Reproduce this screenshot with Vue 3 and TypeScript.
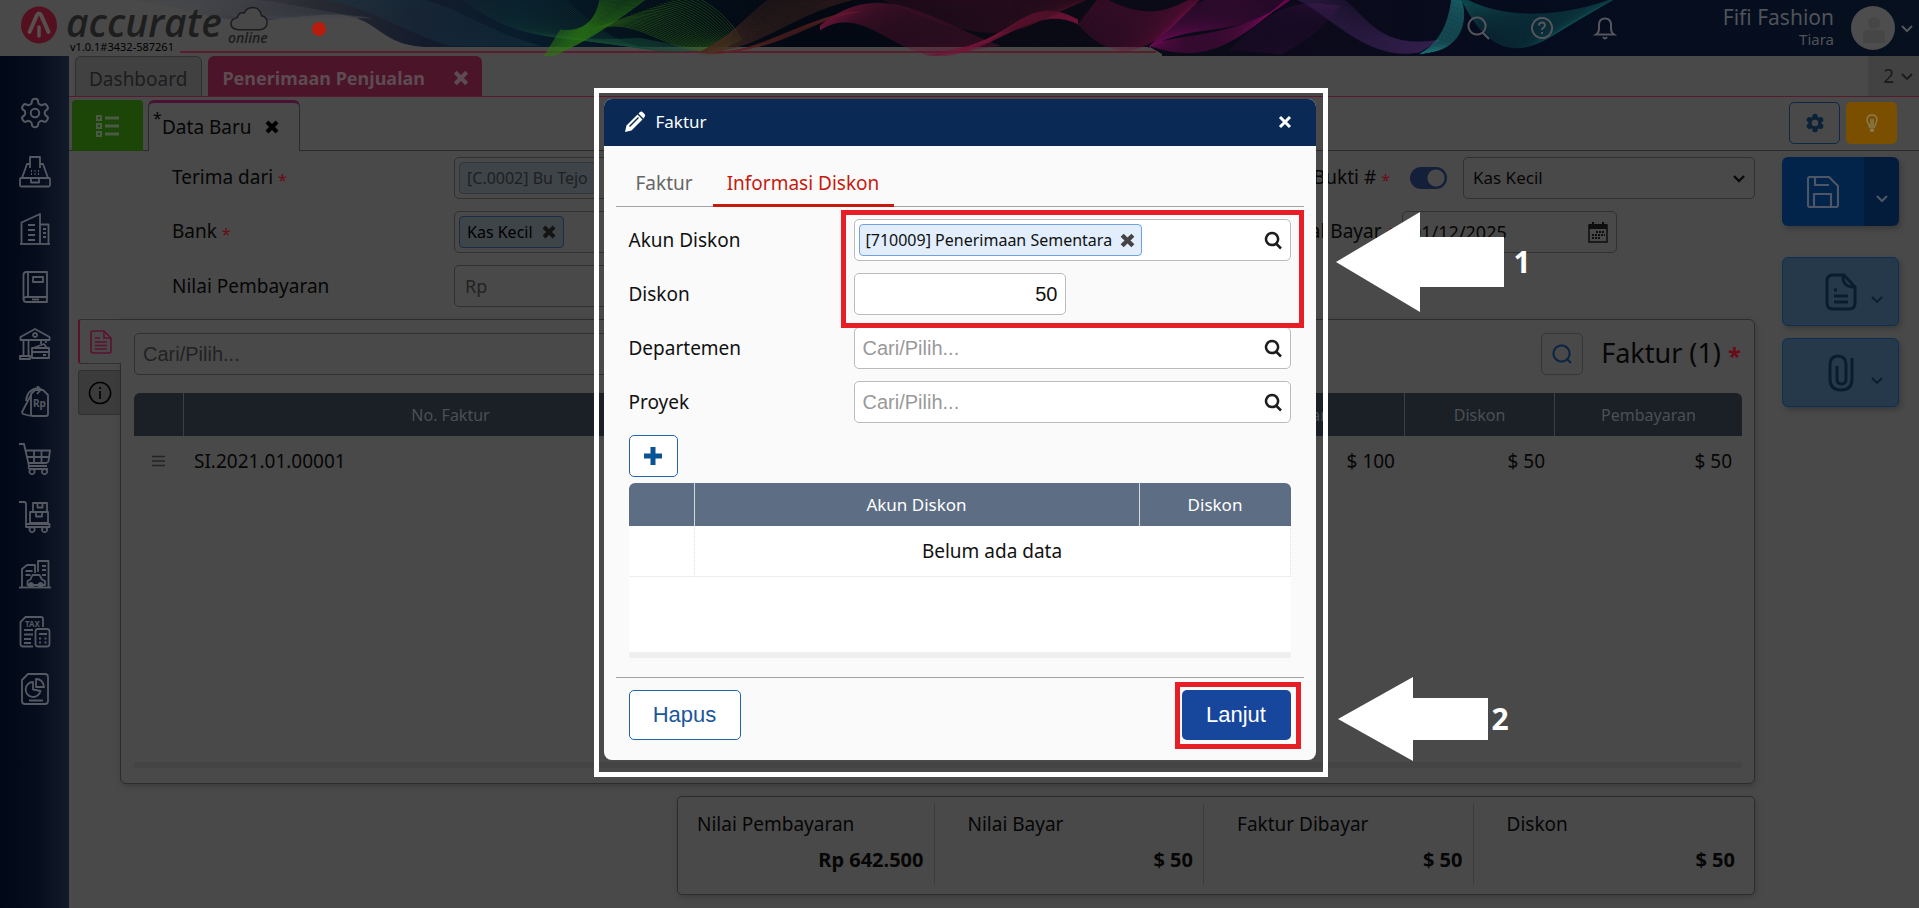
<script setup lang="ts">
import { ref } from 'vue'

interface MenuIcon {
  label: string
  paths: string[]
  text?: string
  tx?: number
  ty?: number
  ts?: number
}

interface Ribbon {
  from: number[]
  to: number[]
  lines: number
  color: string
  opacity: number
}

const gear =
  'M12.22 2h-.44a2 2 0 0 0-2 2v.18a2 2 0 0 1-1 1.73l-.43.25a2 2 0 0 1-2 0l-.15-.08a2 2 0 0 0-2.73.73l-.22.38a2 2 0 0 0 .73 2.73l.15.1a2 2 0 0 1 1 1.72v.51a2 2 0 0 1-1 1.74l-.15.09a2 2 0 0 0-.73 2.73l.22.38a2 2 0 0 0 2.73.73l.15-.08a2 2 0 0 1 2 0l.43.25a2 2 0 0 1 1 1.73V20a2 2 0 0 0 2 2h.44a2 2 0 0 0 2-2v-.18a2 2 0 0 1 1-1.73l.43-.25a2 2 0 0 1 2 0l.15.08a2 2 0 0 0 2.73-.73l.22-.39a2 2 0 0 0-.73-2.73l-.15-.08a2 2 0 0 1-1-1.74v-.5a2 2 0 0 1 1-1.74l.15-.09a2 2 0 0 0 .73-2.73l-.22-.38a2 2 0 0 0-2.73-.73l-.15.08a2 2 0 0 1-2 0l-.43-.25a2 2 0 0 1-1-1.73V4a2 2 0 0 0-2-2z'
const hub = 'M12 9a3 3 0 1 0 0 6a3 3 0 1 0 0-6z'

const menu: MenuIcon[] = [
  {
    label: 'Kasir',
    paths: [
      'M11 12V1h10v11',
      'M11 8H8L3 22h26L24 8h-3',
      'M2 22h28q1 0 1 1v6q0 1.500-1.500 1.500h-27q-1.500 0-1.500-1.500v-6q0-1 1-1z',
      'M12 23v3.500h8V23',
      'M12 15h1M15.500 15h1M19 15h1M12 18h1M15.500 18h1M19 18h1',
    ],
  },
  {
    label: 'Perusahaan',
    paths: [
      'M1 31h30',
      'M2.500 31V9.500L21 1v30',
      'M21 11.500h8.500V31',
      'M9 12h7M9 17h7M9 22h7M9 27h7M24 16h3M24 20h3M24 24h3',
    ],
  },
  {
    label: 'Buku besar',
    paths: [
      'M7.500 1H28v30H7.500q-3 0-3-3V4q0-3 3-3z',
      'M9 1v25',
      'M4.500 28q0-2 3-2H28',
      'M14 6h10v5H14z',
      'M13 28.500h7',
    ],
  },
  {
    label: 'Kas dan bank',
    paths: [
      'M1.500 12V9L16 1l14.500 8v3z',
      'M16 5a2 2 0 1 0 .1 0z',
      'M4.500 12v15M9.500 12v15M22 12v4M27 12v3M1 31v-3h10v3z',
      'M14 20l11-4 3 4',
      'M13 20h17v10H13zM13 24h17M24 27h3',
    ],
  },
  {
    label: 'Penjualan',
    paths: [
      'M12 8l4-4h8l5 5v19q0 2-2 2H14q-2 0-2-2z',
      'M12 9L3 26l1 2 8 2',
      'M7 15q1-12 13-13l3 2M18 0l4 3.500-4 4.500',
    ],
    text: 'Rp',
    tx: 20.5,
    ty: 21,
    ts: 10,
  },
  {
    label: 'Pembelian',
    paths: [
      'M0 1h5l5 22h18M6.500 7.500H31L29.500 18q-.5 2-2.500 2H9M8 14h22M15 8v11M22.500 8v11',
      'M10 23q-1 3 1 3h18',
      'M13 26a2.600 2.600 0 1 0 .1 0zM25.500 26a2.600 2.600 0 1 0 .1 0z',
    ],
  },
  {
    label: 'Persediaan',
    paths: [
      'M0 1h5q2 0 2 2v23h23.500v-3H7',
      'M14 2h14v9H14zM18.500 2v4.500h5V2M11 11h18v11H11zM17 11v4.500h6V11',
      'M13 26a2.600 2.600 0 1 0 .1 0zM25.500 26a2.600 2.600 0 1 0 .1 0z',
    ],
  },
  {
    label: 'Aset tetap',
    paths: [
      'M0 29.500h32',
      'M3 29V11l5-4h8v8M19 14V3h10.500v26',
      'M6.500 13h7M6.500 17h5M23 8h4M23 12h4M23 17h4',
      'M8.500 27v-4l3-1.500 2-4.500h7l2.500 4.500 3 1.500v4zM12 25a2 2 0 1 0 .1 0zM21.500 25a2 2 0 1 0 .1 0z',
    ],
  },
  {
    label: 'Pajak',
    paths: [
      'M14 30.500H4q-2.500 0-2.500-2.500V6l5-5H22q2 0 2 2v8',
      'M5 14h9M5 18.500h9M5 23h7M5 27h7',
      'M19 13h9q2.500 0 2.500 2.500V28q0 2.500-2.500 2.500h-9q-2.500 0-2.500-2.500V15.500q0-2.500 2.500-2.500zM20 18h8M20 22.500h2M25.500 22.500h2M20 26.500h2M25.500 26.500h2',
    ],
    text: 'TAX',
    tx: 13.5,
    ty: 10.5,
    ts: 8,
  },
  {
    label: 'Laporan',
    paths: [
      'M9 1h17q3 0 3 3v24q0 3-3 3H6q-3 0-3-3V7z',
      'M14 9a7.500 7.500 0 1 0 7.500 9l-7.500-1.500z',
      'M17 6q7 0 8 8h-8zM10 27.500h14',
    ],
  },
]

const ribbons: Ribbon[] = [
  { from: [140, -2, 190, 2, 220, 22, 300, 18], to: [200, -2, 270, -4, 310, 12, 370, 18], lines: 20, color: '#44484e', opacity: 0.45 },
  { from: [300, -4, 360, 0, 400, 30, 450, 46], to: [400, -4, 450, 0, 480, 30, 540, 46], lines: 40, color: '#1d3a4a', opacity: 0.3 },
  { from: [460, -4, 500, 30, 540, 44, 640, 38], to: [560, -4, 590, 20, 620, 60, 700, 50], lines: 40, color: '#184a38', opacity: 0.3 },
  { from: [540, 62, 590, 40, 610, 26, 650, -4], to: [560, 30, 590, 34, 600, 10, 600, -6], lines: 44, color: '#2d7a12', opacity: 0.42 },
  { from: [590, 30, 640, 14, 660, 52, 715, 52], to: [690, -6, 725, 10, 735, 30, 742, 40], lines: 28, color: '#2f6a12', opacity: 0.5 },
  { from: [700, 52, 760, 54, 790, 10, 870, -4], to: [715, 44, 750, 20, 760, -2, 790, -10], lines: 50, color: '#4a2820', opacity: 0.34 },
  { from: [700, 54, 750, 58, 800, 20, 850, 12], to: [740, 50, 790, 44, 820, 16, 860, 12], lines: 16, color: '#5c2420', opacity: 0.3 },
  { from: [820, 30, 860, 4, 890, 50, 935, 56], to: [820, 26, 880, -24, 930, 20, 1000, 46], lines: 56, color: '#621634', opacity: 0.32 },
  { from: [925, 56, 990, 62, 1030, 0, 1078, 24], to: [990, 42, 1020, 20, 1040, -2, 1078, 20], lines: 30, color: '#741638', opacity: 0.36 },
  { from: [870, -6, 930, 20, 990, 50, 1040, 20], to: [960, -6, 1000, 0, 1030, 4, 1100, -6], lines: 44, color: '#4c1028', opacity: 0.36 },
  { from: [1078, 24, 1110, 60, 1140, 58, 1175, 24], to: [1100, -4, 1160, 30, 1180, 0, 1210, -10], lines: 54, color: '#6c103c', opacity: 0.36 },
  { from: [1148, 48, 1180, 16, 1190, 0, 1230, -6], to: [1150, 46, 1200, 20, 1240, 40, 1285, 0], lines: 44, color: '#5c0c4c', opacity: 0.4 },
  { from: [1150, 46, 1200, 62, 1230, 50, 1285, 0], to: [1160, 42, 1190, 34, 1240, 36, 1290, 0], lines: 22, color: '#740c56', opacity: 0.36 },
  { from: [1230, 50, 1260, 20, 1290, -4, 1330, 6], to: [1280, 54, 1310, 40, 1330, 20, 1340, 6], lines: 34, color: '#36103f', opacity: 0.4 },
  { from: [1285, -4, 1320, 0, 1360, 64, 1420, 52], to: [1340, -4, 1370, 20, 1380, 50, 1440, 40], lines: 50, color: '#37224f', opacity: 0.42 },
  { from: [1420, 54, 1445, 40, 1450, 14, 1452, -4], to: [1428, 52, 1460, 50, 1470, 20, 1460, -4], lines: 24, color: '#1c6a70', opacity: 0.6 },
  { from: [1460, -4, 1480, 40, 1510, 68, 1560, 30], to: [1460, -4, 1500, 20, 1560, 20, 1620, -4], lines: 56, color: '#114c50', opacity: 0.36 },
]

function strands(r: Ribbon): string[] {
  return Array.from({ length: r.lines }, (_, i) => {
    const t = i / (r.lines - 1)
    const p = r.from.map((v, k) => Math.round((v + (r.to[k] - v) * t) * 10) / 10)
    return `M${p[0]} ${p[1]}C${p[2]} ${p[3]} ${p[4]} ${p[5]} ${p[6]} ${p[7]}`
  })
}

const cross = 'M2 2L12 12M12 2L2 12'
const chevron = 'M2 3l5 5 5-5'
const lens = 'M8 2a6 6 0 1 0 .1 0zM12 12.500l5 5'

const summary = [
  { label: 'Nilai Pembayaran', value: 'Rp 642.500' },
  { label: 'Nilai Bayar', value: '$ 50' },
  { label: 'Faktur Dibayar', value: '$ 50' },
  { label: 'Diskon', value: '$ 50' },
]

const diskon = ref('50')
const tanggal = ref('01/12/2025')
const auto = ref(true)
</script>

<template>
  <div class="app">
    <header class="top">
      <svg class="art" viewBox="0 0 1919 56" preserveAspectRatio="none" aria-hidden="true">
        <defs>
          <linearGradient id="sky" x1="0" x2="1">
            <stop offset="0" stop-color="#494949" />
            <stop offset=".1" stop-color="#454648" />
            <stop offset=".16" stop-color="#2a2c33" />
            <stop offset=".22" stop-color="#141b2b" />
            <stop offset=".27" stop-color="#081c2c" />
            <stop offset=".33" stop-color="#04121c" />
            <stop offset=".42" stop-color="#030812" />
            <stop offset=".55" stop-color="#0a0a14" />
            <stop offset=".68" stop-color="#0c0a1a" />
            <stop offset=".8" stop-color="#040c1e" />
            <stop offset="1" stop-color="#07101f" />
          </linearGradient>
        </defs>
        <rect width="1919" height="56" fill="url(#sky)" />
        <path d="M0 0H130C190 6 210 24 268 20C300 17 318 14 340 15C380 18 380 47 430 47H1150L1162 54V56H0z" fill="#494949" />
        <path d="M180 52H1156" stroke="#5c1c2e" stroke-width="2" />
        <g v-for="(r, i) in ribbons" :key="i" fill="none" :stroke="r.color" :stroke-opacity="r.opacity">
          <path v-for="(d, k) in strands(r)" :key="k" :d="d" />
        </g>
      </svg>
      <div class="brand">
        <svg class="mark" viewBox="0 0 36 42" aria-hidden="true">
          <ellipse cx="18" cy="19" rx="18" ry="18.500" fill="#551020" />
          <path d="M8.500 26L16 9q2-3 4 0l7.500 17" fill="none" stroke="#57504f" stroke-width="4" stroke-linecap="round" />
          <path d="M18 21v9" stroke="#57504f" stroke-width="3.500" stroke-linecap="round" />
        </svg>
        <div class="names">
          <span class="word">accurate</span>
          <span class="version">v1.0.1#3432-587261</span>
        </div>
        <div class="cloud">
          <svg viewBox="0 0 42 28" aria-hidden="true">
            <path d="M9 25.500H33q7.500-1 7.500-8q-.5-6-6-7Q33 1.500 24.500 1.500q-6.500.5-8.500 6Q10 6.500 8.500 12.500q-7 1.500-7 7q.5 5 7.500 6z" fill="#484848" stroke="#1c1c1c" stroke-width="1.600" />
          </svg>
          <span>online</span>
        </div>
        <span class="dot"></span>
      </div>
      <div class="account">
        <button class="plain" aria-label="Cari">
          <svg width="26" height="26" viewBox="0 0 26 26"><path d="M11 2.500a8.500 8.500 0 1 0 .1 0zM17 18l6 6" /></svg>
        </button>
        <button class="plain" aria-label="Bantuan">
          <svg width="26" height="26" viewBox="0 0 26 26"><path d="M13 3a10 10 0 1 0 .1 0zM10 10.500q0-3 3-3t3 2.800q0 1.600-1.800 2.600-1.200.7-1.200 2.100M13 17v2" /></svg>
        </button>
        <button class="plain" aria-label="Notifikasi">
          <svg width="26" height="26" viewBox="0 0 26 26"><path d="M4 19.500q3-2 3-6v-3.500q0-6.500 6-6.500t6 6.500v3.500q0 4 3 6zM11 22q2 3 4 0" /></svg>
        </button>
        <div class="who">
          <strong>Fifi Fashion</strong>
          <span>Tiara</span>
        </div>
        <svg class="avatar" viewBox="0 0 44 44" aria-hidden="true">
          <circle cx="22" cy="22" r="22" fill="#4d4d4d" />
          <circle cx="23" cy="17" r="6" fill="#464646" />
          <path d="M12 37V29q0-5 5-5h12q5 0 5 5v8z" fill="#464646" />
        </svg>
        <button class="plain caret" aria-label="Menu akun">
          <svg width="14" height="11" viewBox="0 0 14 11"><path :d="chevron" /></svg>
        </button>
      </div>
    </header>

    <div class="body">
      <nav class="side">
        <a href="#" aria-label="Pengaturan">
          <svg width="34" height="34" viewBox="0 0 24 24"><g stroke-width="1.400"><path :d="gear" /><path :d="hub" /></g></svg>
        </a>
        <a v-for="m in menu" :key="m.label" href="#" :aria-label="m.label">
          <svg width="32" height="32" viewBox="0 0 32 32">
            <path v-for="(d, i) in m.paths" :key="i" :d="d" />
            <text v-if="m.text" :x="m.tx" :y="m.ty" :font-size="m.ts" text-anchor="middle">{{ m.text }}</text>
          </svg>
        </a>
      </nav>

      <main class="main">
        <div class="tabs">
          <button class="tab">Dashboard</button>
          <button class="tab on">
            Penerimaan Penjualan
            <svg width="16" height="16" viewBox="0 0 14 14"><path :d="cross" stroke-width="3.600" /></svg>
          </button>
          <button class="count">
            2
            <svg width="14" height="11" viewBox="0 0 14 11"><path :d="chevron" stroke-width="1.800" /></svg>
          </button>
        </div>

        <div class="subtabs">
          <button class="list" aria-label="Daftar">
            <svg width="24" height="24" viewBox="0 0 24 24" fill="none" stroke="#4a5a44" stroke-width="2">
              <path d="M1 2h4v4H1zM1 10h4v4H1zM1 18h4v4H1z" />
              <path d="M9 4h14M9 12h14M9 20h14" stroke-width="3" />
            </svg>
          </button>
          <button class="subtab">
            <sup>*</sup>Data Baru
            <svg width="14" height="14" viewBox="0 0 14 14"><path :d="cross" stroke-width="4" /></svg>
          </button>
          <div class="tools">
            <button class="cog" aria-label="Preferensi">
              <svg width="20" height="20" viewBox="0 0 24 24"><path :d="gear" stroke-width="2" fill="#0c2238" stroke="#0c2238" /><circle cx="12" cy="12" r="4" fill="#494949" /></svg>
            </button>
            <button class="tip" aria-label="Petunjuk">
              <svg width="20" height="20" viewBox="0 0 20 20" fill="none" stroke="#8a7a50" stroke-width="1.500"><path d="M7.500 14q0-2-1.500-4T5 6.500Q5.500 2 10 2t5 4.500q0 1.500-1 3.500t-1.500 4zM9 6v7M11 6v7" /><path d="M8 15.500h4v2l-1 1.500H9l-1-1.500z" fill="#8a7a50" stroke="none" /></svg>
            </button>
          </div>
        </div>

        <div class="work">
          <div class="content">
            <div class="form">
              <div class="line">
                <label for="dari">Terima dari <i>*</i></label>
                <div class="box"><span class="chip off">[C.0002] Bu Tejo</span><input id="dari" /></div>
                <div class="pair">
                  <label for="bukti">No Bukti # <i>*</i></label>
                  <input v-model="auto" class="toggle" type="checkbox" aria-label="Nomor otomatis" />
                  <span class="pick">
                    <select id="bukti"><option>Kas Kecil</option></select>
                    <svg width="14" height="11" viewBox="0 0 14 11"><path :d="chevron" stroke-width="2.400" /></svg>
                  </span>
                </div>
              </div>
              <div class="line">
                <label for="bank">Bank <i>*</i></label>
                <div class="box">
                  <span class="chip">Kas Kecil <svg width="14" height="14" viewBox="0 0 14 14"><path :d="cross" stroke-width="4" /></svg></span>
                  <input id="bank" />
                </div>
                <div class="pair">
                  <label for="tgl">Tanggal Bayar <i>*</i></label>
                  <span class="date">
                    <input id="tgl" v-model="tanggal" />
                    <svg width="20" height="22" viewBox="0 0 20 22">
                      <path d="M1 4h18v17H1z" fill="none" stroke="#0e0e0e" stroke-width="1.500" />
                      <path d="M1 3h18v5H1zM4 1h2v3H4zM14 1h2v3h-2z" fill="#0e0e0e" />
                      <path d="M8 11h9M4 14h13M4 17h9" stroke="#0e0e0e" stroke-width="2" stroke-dasharray="2 1" />
                    </svg>
                  </span>
                </div>
              </div>
              <div class="line">
                <label for="nilai">Nilai Pembayaran</label>
                <div class="box"><input id="nilai" placeholder="Rp" /></div>
                <div class="pair"></div>
              </div>
            </div>

            <div class="detail">
              <div class="rail">
                <button class="r on" aria-label="Rincian">
                  <svg width="22" height="24" viewBox="0 0 22 24"><path d="M3 1h11l7 7v13q0 2-2 2H3q-2 0-2-2V3q0-2 2-2zM14 1v7h7M5 8h5M5 12h12M5 15.500h12M5 19h12" /></svg>
                </button>
                <button class="r" aria-label="Info">
                  <svg width="24" height="24" viewBox="0 0 24 24"><path d="M12 1.500a10.500 10.500 0 1 0 .1 0zM12 10v8M12 6v2" /></svg>
                </button>
              </div>
              <section class="panel">
                <div class="bar">
                  <input class="find" placeholder="Cari/Pilih..." aria-label="Cari faktur" />
                  <button class="look" aria-label="Cari"><svg width="20" height="20" viewBox="0 0 20 20"><path d="M9.500 1.500a8 8 0 1 0 .1 0zM15 15l4 4" /></svg></button>
                  <h2>Faktur (1) <i>*</i></h2>
                </div>
                <table class="grid">
                  <colgroup><col class="c1" /><col class="c2" /><col /><col class="c4" /><col class="c5" /><col class="c6" /></colgroup>
                  <thead>
                    <tr><th></th><th>No. Faktur</th><th></th><th>Nilai Bayar</th><th>Diskon</th><th>Pembayaran</th></tr>
                  </thead>
                  <tbody>
                    <tr>
                      <td class="grip"><svg width="13" height="12" viewBox="0 0 13 12"><path d="M0 1.500h13M0 6h13M0 10.500h13" /></svg></td>
                      <td>SI.2021.01.00001</td>
                      <td></td>
                      <td class="num">$ 100</td>
                      <td class="num">$ 50</td>
                      <td class="num">$ 50</td>
                    </tr>
                  </tbody>
                </table>
                <div class="hbar"></div>
              </section>
            </div>

            <dl class="sum">
              <div v-for="s in summary" :key="s.label">
                <dt>{{ s.label }}</dt>
                <dd>{{ s.value }}</dd>
              </div>
            </dl>
          </div>

          <aside class="acts">
            <button class="act save" aria-label="Simpan">
              <svg width="32" height="32" viewBox="0 0 32 32"><path d="M3 1h19l9 9v19q0 2-2 2H3q-2 0-2-2V3q0-2 2-2zM7 31V18h17v13M8 2v7h14" /></svg>
              <svg class="car" width="14" height="11" viewBox="0 0 14 11"><path :d="chevron" /></svg>
            </button>
            <button class="act first" aria-label="Dokumen">
              <svg width="32" height="38" viewBox="0 0 32 38"><path d="M8 2h11l11 12v16q0 6-6 6H8q-6 0-6-6V8q0-6 6-6zM18 2q-1 12 11 12M9 17h3M9 23h14M9 29h14" /></svg>
              <svg class="car" width="14" height="11" viewBox="0 0 14 11"><path :d="chevron" /></svg>
            </button>
            <button class="act" aria-label="Lampiran">
              <svg width="32" height="38" viewBox="0 0 32 38"><path d="M27 4v21q0 11-11 11T5 25V11q0-9 8-9t8 9v14q0 5-4.500 5T12 25V12" /></svg>
              <svg class="car" width="14" height="11" viewBox="0 0 14 11"><path :d="chevron" /></svg>
            </button>
          </aside>
        </div>
      </main>
    </div>

    <div class="frame">
      <div class="dialog" role="dialog" aria-labelledby="judul">
        <div class="dhead">
          <svg width="22" height="22" viewBox="0 0 22 22" fill="#fff">
            <path d="M1 21l1.500-6.500L13.500 3.500l5 5L7.500 19.500z" />
            <path d="M14.500 2.500L16 1q1.500-1 3 .5l1.500 1.500q1.500 1.500 0 3L19.500 7.500z" />
            <path d="M5.500 15.500L14.500 6.500" stroke="#0a2a55" stroke-width="1.500" />
          </svg>
          <h1 id="judul">Faktur</h1>
          <button aria-label="Tutup"><svg width="14" height="14" viewBox="0 0 14 14"><path :d="cross" stroke-width="3" /></svg></button>
        </div>
        <div class="dtabs">
          <button>Faktur</button>
          <button class="on">Informasi Diskon</button>
        </div>
        <div class="fields">
          <div class="f">
            <label for="akun">Akun Diskon</label>
            <div class="in">
              <span class="tag">[710009] Penerimaan Sementara <svg width="15" height="15" viewBox="0 0 14 14"><path :d="cross" stroke-width="4" /></svg></span>
              <input id="akun" />
              <svg class="lens" width="19" height="19" viewBox="0 0 19 19"><path :d="lens" /></svg>
            </div>
          </div>
          <div class="f">
            <label for="diskon">Diskon</label>
            <input id="diskon" v-model="diskon" class="amount" />
          </div>
          <div class="f">
            <label for="dept">Departemen</label>
            <div class="in">
              <input id="dept" placeholder="Cari/Pilih..." />
              <svg class="lens" width="19" height="19" viewBox="0 0 19 19"><path :d="lens" /></svg>
            </div>
          </div>
          <div class="f">
            <label for="proyek">Proyek</label>
            <div class="in">
              <input id="proyek" placeholder="Cari/Pilih..." />
              <svg class="lens" width="19" height="19" viewBox="0 0 19 19"><path :d="lens" /></svg>
            </div>
          </div>
          <button class="add" aria-label="Tambah"><svg width="18" height="18" viewBox="0 0 18 18"><path d="M9 0v18M0 9h18" stroke="#0b5394" stroke-width="5" /></svg></button>
          <div class="sheet">
            <table>
              <colgroup><col class="k1" /><col /><col class="k3" /></colgroup>
              <thead><tr><th></th><th>Akun Diskon</th><th>Diskon</th></tr></thead>
              <tbody><tr><td></td><td colspan="2">Belum ada data</td></tr></tbody>
            </table>
          </div>
          <div class="mark-area"></div>
        </div>
        <div class="dfoot">
          <button class="del">Hapus</button>
          <span class="ring"><button class="next">Lanjut</button></span>
        </div>
      </div>
      <div class="call one">
        <svg width="168" height="100" viewBox="0 0 168 100" aria-hidden="true"><path d="M0 50L84 0v25h84v50H84v25z" fill="#fff" /></svg>
        <b>1</b>
      </div>
      <div class="call two">
        <svg width="150" height="84" viewBox="0 0 150 84" aria-hidden="true"><path d="M0 42L75 0v21h75v42H75v21z" fill="#fff" /></svg>
        <b>2</b>
      </div>
    </div>
  </div>
</template>

<style>
html,
body {
  margin: 0;
  background: #494949;
}
</style>

<style scoped>
.app,
.app * {
  box-sizing: border-box;
}
.app {
  position: relative;
  display: flex;
  flex-direction: column;
  min-height: 100vh;
  overflow: hidden;
  background: #494949;
  color: #060606;
  font-family: "Noto Sans", "Open Sans", sans-serif;
  font-size: 19px;
  line-height: 26px;
}
button,
input,
select {
  margin: 0;
  padding: 0;
  border: 0;
  background: none;
  color: inherit;
  font: inherit;
}
input {
  min-width: 0;
  outline: 0;
}
i {
  color: #6a0a18;
  font-size: 16px;
  font-style: normal;
  vertical-align: -2px;
}
svg {
  flex: none;
}

/* header */
.top {
  position: relative;
  display: flex;
  justify-content: space-between;
  height: 56px;
}
.art {
  position: absolute;
  inset: 0;
  width: 100%;
  height: 100%;
}
.brand,
.account {
  position: relative;
  display: flex;
}
.brand {
  padding: 6px 0 0 21px;
}
.mark {
  width: 36px;
  height: 42px;
}
.names {
  display: flex;
  flex-direction: column;
  width: 162px;
  margin-left: 9px;
}
.word {
  height: 34px;
  color: #1e1e1e;
  font: italic 600 39px/32px "Open Sans", "Noto Sans", sans-serif;
}
.version {
  padding-left: 4px;
  color: #000;
  font-size: 11px;
  line-height: 14px;
}
.cloud {
  width: 42px;
  color: #1c1c1c;
  font: italic 600 14px/12px "Open Sans", sans-serif;
}
.cloud svg {
  display: block;
  width: 42px;
  height: 26px;
}
.dot {
  width: 14px;
  height: 14px;
  margin: 16px 0 0 42px;
  border-radius: 50%;
  background: #b81c0c;
}
.account {
  align-items: center;
  padding-right: 5px;
}
.plain {
  display: flex;
  margin-right: 37px;
}
.plain svg,
.caret svg {
  fill: none;
  stroke: #55555c;
  stroke-width: 2;
}
.who {
  display: flex;
  flex-direction: column;
  align-items: flex-end;
  margin: 0 17px 2px 68px;
  color: #505359;
  font-size: 15px;
  line-height: 20px;
}
.who strong {
  font-size: 21px;
  font-weight: 400;
  line-height: 24px;
}
.avatar {
  width: 44px;
  height: 44px;
  margin-right: 5px;
}
.plain.caret {
  margin: 0;
}

/* shell */
.body {
  display: flex;
  flex: 1;
}
.side {
  display: flex;
  flex-direction: column;
  align-items: center;
  justify-content: space-between;
  align-self: stretch;
  width: 69px;
  padding: 40px 0 203px;
  background: linear-gradient(90deg, #010917, #050c1c 50%, #131a2a);
}
.side a {
  display: flex;
}
.side svg {
  fill: none;
  stroke: #555962;
  stroke-width: 1.800;
  stroke-linejoin: round;
}
.side text {
  fill: #555962;
  stroke: none;
  font-weight: 700;
}
.main {
  display: flex;
  flex: 1;
  flex-direction: column;
}
.tabs {
  display: flex;
  gap: 6px;
  height: 41px;
  padding-left: 6px;
  border-bottom: 1px solid #581a2c;
}
.tab {
  padding: 4px 14px 0 13px;
  border: 1px solid #303030;
  border-bottom: 0;
  border-radius: 6px 6px 0 0;
  background: #414141;
  color: #1d1d1d;
}
.tab.on {
  display: flex;
  align-items: center;
  gap: 28px;
  padding: 4px 13px 0 14px;
  border: 0;
  background: #4c1428;
  color: #5c4c52;
  font-size: 18px;
  font-weight: 700;
}
.tab.on svg {
  stroke: #5c4c52;
}
.count {
  display: flex;
  align-items: center;
  justify-content: flex-end;
  gap: 6px;
  width: 51px;
  margin-left: auto;
  padding-right: 5px;
  background: #424242;
  color: #1a1a1a;
}
.count svg {
  fill: none;
  stroke: #1a1a1a;
}
.subtabs {
  display: flex;
  height: 54px;
  padding: 3px 0 0 3px;
  background: linear-gradient(#2a2a2a, #2a2a2a) 0 100% / 100% 1px no-repeat;
}
.list {
  display: flex;
  align-items: center;
  justify-content: center;
  width: 71px;
  border-radius: 4px 4px 0 0;
  background: #1c4608;
}
.subtab {
  position: relative;
  display: flex;
  align-items: center;
  gap: 13px;
  width: 152px;
  margin-left: 5px;
  padding-left: 13px;
  border: 1px solid #2a2a2a;
  border-top: 3px solid #4b1032;
  border-bottom: 0;
  border-radius: 6px 6px 0 0;
  background: #494949;
}
.subtab sup {
  position: absolute;
  top: 2px;
  left: 4px;
  line-height: 26px;
}
.subtab svg {
  stroke: #000;
}
.tools {
  display: flex;
  gap: 6px;
  margin-left: auto;
  padding: 2px 22px 7px 0;
}
.tools button {
  display: flex;
  align-items: center;
  justify-content: center;
  width: 51px;
  border-radius: 5px;
}
.cog {
  border: 1px solid #0c2844;
}
.cog svg {
  fill: none;
}
.tip {
  background: #7a5000;
}
.work {
  display: flex;
  flex: 1;
  gap: 27px;
  padding: 6px 20px 13px 9px;
}
.content {
  display: flex;
  flex: 1;
  flex-direction: column;
  gap: 12px;
}

/* form */
.form {
  display: flex;
  flex-direction: column;
  gap: 12px;
  padding-left: 94px;
}
.line {
  display: flex;
  align-items: center;
  height: 42px;
}
.line > label {
  width: 282px;
}
.box {
  display: flex;
  flex: 1;
  align-items: center;
  height: 42px;
  padding-left: 4px;
  border: 1px solid #303030;
  border-radius: 5px;
}
.box input {
  flex: 1;
}
.box input::placeholder,
.find::placeholder {
  color: #222;
  opacity: 1;
}
.box > input:first-child {
  padding-left: 6px;
  font-size: 18px;
}
.chip {
  display: flex;
  align-items: center;
  gap: 9px;
  height: 32px;
  padding: 0 7px;
  border: 1px solid #1a2c46;
  border-radius: 4px;
  background: #3f4448;
  color: #000;
  font-size: 16px;
}
.chip.off {
  border-color: #2e363e;
  color: #1d2022;
}
.chip svg {
  stroke: #141414;
}
.pair {
  display: flex;
  align-items: center;
  width: 500px;
  margin-left: 260px;
}
.pair label {
  width: 135px;
  text-align: right;
  white-space: nowrap;
}
.toggle {
  width: 37px;
  height: 22px;
  margin: 0 16px 0 20px;
  border-radius: 11px;
  appearance: none;
  background: radial-gradient(circle at 26px 11px, #494949 8px, #14203a 9px);
}
.pick {
  display: flex;
  flex: 1;
  align-items: center;
  padding-right: 8px;
  border: 1px solid #303030;
  border-radius: 5px;
}
.pick select {
  flex: 1;
  height: 40px;
  padding-left: 9px;
  appearance: none;
  font-size: 17px;
}
.pick svg {
  fill: none;
  stroke: #0a0a0a;
}
.date {
  display: flex;
  align-items: center;
  width: 215px;
  height: 42px;
  margin-left: 12px;
  padding: 0 8px;
  border: 1px solid #303030;
  border-radius: 5px;
}
.date input {
  flex: 1;
  font-size: 18px;
}

/* detail */
.detail {
  display: flex;
  flex: 1;
}
.rail {
  display: flex;
  flex-direction: column;
  gap: 6px;
  width: 42px;
}
.r {
  display: flex;
  align-items: center;
  justify-content: center;
  height: 45px;
  border: 1px solid #303030;
  border-right: 0;
  border-radius: 3px 0 0 3px;
  background: #3b3b3b;
}
.r svg {
  fill: none;
  stroke: #000;
  stroke-width: 1.600;
}
.r.on {
  position: relative;
  width: 43px;
  border-left: 2px solid #5a1228;
  background: #494949;
}
.r.on svg {
  stroke: #5a1230;
}
.panel {
  display: flex;
  flex: 1;
  flex-direction: column;
  padding: 13px 12px 15px 13px;
  border: 1px solid #2c2c2c;
  border-radius: 0 6px 6px 6px;
  box-shadow: 1px 2px 5px #3c3c3c;
}
.bar {
  display: flex;
  align-items: center;
  height: 42px;
}
.find {
  flex: 1;
  max-width: 900px;
  height: 42px;
  padding-left: 8px;
  border: 1px solid #303030;
  border-radius: 5px;
  font: 20px/24px "Liberation Sans", Arial, sans-serif;
}
.look {
  display: flex;
  align-items: center;
  justify-content: center;
  width: 42px;
  height: 42px;
  margin-left: auto;
  border: 1px solid #363636;
  border-radius: 5px;
}
.look svg {
  fill: none;
  stroke: #0c2444;
  stroke-width: 2;
}
.bar h2 {
  margin: 0 1px 0 18px;
  font-size: 27px;
  font-weight: 400;
  line-height: 36px;
}
.bar h2 i {
  font-size: 24px;
  font-weight: 700;
}
.grid {
  width: 100%;
  margin-top: 18px;
  border-collapse: separate;
  border-spacing: 0;
  table-layout: fixed;
}
.c1 {
  width: 50px;
}
.c2 {
  width: 534px;
}
.c4 {
  width: 236px;
}
.c5 {
  width: 150px;
}
.c6 {
  width: 187px;
}
.grid th {
  height: 43px;
  padding: 0;
  border-right: 1px solid #3c4044;
  background: #1b2027;
  color: #4c4f54;
  font-size: 16px;
  font-weight: 400;
}
.grid th:first-child {
  border-top-left-radius: 6px;
}
.grid th:last-child {
  border-right: 0;
  border-top-right-radius: 6px;
}
.grid td {
  height: 50px;
  padding: 0 10px;
}
.grid .grip {
  padding-left: 18px;
}
.grip svg {
  display: block;
  stroke: #242424;
  stroke-width: 1.500;
}
.num {
  text-align: right;
}
.hbar {
  height: 6px;
  margin-top: auto;
  border-radius: 3px;
  background: #444;
}
.sum {
  display: grid;
  grid-template-columns: 257fr 270fr 270fr 281fr;
  align-self: flex-end;
  width: 1078px;
  height: 99px;
  margin: 0;
  padding: 7px 0 9px;
  border: 1px solid #2c2c2c;
  border-radius: 5px;
  box-shadow: 1px 2px 5px #3c3c3c;
}
.sum div {
  padding: 7px 10px 0 33px;
  border-right: 1px solid #3c3c3c;
}
.sum div:first-child {
  padding-left: 19px;
}
.sum div:last-child {
  padding-right: 19px;
  border: 0;
}
.sum dd {
  margin: 10px 0 0;
  font-size: 20px;
  font-weight: 700;
  text-align: right;
}

/* side actions */
.acts {
  display: flex;
  flex-direction: column;
  gap: 12px;
  width: 117px;
}
.act {
  position: relative;
  display: flex;
  align-items: center;
  justify-content: center;
  width: 117px;
  height: 69px;
  border: 1px solid #0b3054;
  border-radius: 6px;
  background: #26394a;
  box-shadow: 2px 3px 5px #3a3a3a;
}
.act svg {
  fill: none;
  stroke: #0a1c30;
  stroke-width: 3;
}
.act .car {
  position: absolute;
  right: 14px;
  bottom: 20px;
  stroke-width: 1.800;
}
.act.first {
  margin-top: 19px;
}
.act.save {
  padding-right: 36px;
  border: 0;
  background: linear-gradient(90deg, #02234a 0 82px, #031c3c 82px);
}
.act.save svg {
  stroke: #4c5664;
  stroke-width: 2.200;
}
.act.save .car {
  right: 10px;
  bottom: 22px;
}

/* dialog */
.frame {
  position: absolute;
  top: 88px;
  left: 50%;
  width: 734px;
  margin-left: -366px;
  padding: 6px 7px 12px 5px;
  border: 5px solid #fff;
}
.dialog {
  border-radius: 8px;
  background: #fafafa;
  color: #111;
}
.dhead {
  display: flex;
  align-items: center;
  height: 47px;
  padding: 0 24px 2px 20px;
  border-radius: 8px 8px 0 0;
  background: #0a2a55;
  color: #fff;
}
.dhead h1 {
  flex: 1;
  margin: 0 0 0 10px;
  font-size: 17px;
  font-weight: 400;
}
.dhead button {
  display: flex;
}
.dhead button svg {
  stroke: #fff;
}
.dtabs {
  display: flex;
  height: 61px;
  margin: 0 12px;
  padding: 13px 8px 0;
  background: linear-gradient(#a3a3a3, #a3a3a3) 0 100% / 100% 1px no-repeat;
  color: #666;
}
.dtabs button {
  padding: 0 12px;
}
.dtabs .on {
  margin-left: 8px;
  padding: 3px 15px 0 14px;
  border-bottom: 3px solid #c61a10;
  color: #c61a10;
}
.fields {
  position: relative;
  display: flex;
  flex-direction: column;
  gap: 12px;
  padding: 12px 25px 0;
}
.mark-area {
  position: absolute;
  top: 3px;
  right: 12px;
  width: 463px;
  height: 118px;
  border: 5px solid #e81e26;
  pointer-events: none;
}
.f {
  display: flex;
  align-items: center;
}
.f label {
  flex: none;
  width: 225px;
}
.in {
  display: flex;
  flex: 1;
  align-items: center;
  min-width: 0;
  height: 42px;
  padding: 0 7px 0 4px;
  border: 1px solid #bbb;
  border-radius: 5px;
  background: #fff;
}
.in input {
  flex: 1;
  font: 20px/24px "Liberation Sans", Arial, sans-serif;
}
.in input:first-child {
  padding-left: 4px;
}
.in input::placeholder {
  color: #999;
  opacity: 1;
}
.lens {
  fill: none;
  stroke: #1c1c1c;
  stroke-width: 2.500;
}
.tag {
  display: flex;
  flex: none;
  align-items: center;
  gap: 8px;
  height: 32px;
  padding: 0 6px;
  border: 1px solid #6ea3e0;
  border-radius: 4px;
  background: #e2eefc;
  font-size: 16px;
  white-space: nowrap;
}
.tag svg {
  stroke: #444;
}
.amount {
  width: 212px;
  height: 42px;
  padding-right: 7px;
  border: 1px solid #bbb;
  border-radius: 5px;
  background: #fff;
  font: 20px/24px "Liberation Sans", Arial, sans-serif;
  text-align: right;
}
.add {
  display: flex;
  align-items: center;
  justify-content: center;
  width: 49px;
  height: 42px;
  border: 1px solid #1f66ad;
  border-radius: 5px;
  background: #fff;
}
.sheet {
  height: 175px;
  margin-top: -6px;
  border-bottom: 6px solid #efefef;
  background: #fff;
}
.sheet table {
  width: 100%;
  border-collapse: separate;
  border-spacing: 0;
  table-layout: fixed;
}
.k1 {
  width: 66px;
}
.k3 {
  width: 151px;
}
.sheet th {
  height: 43px;
  padding: 0;
  border-right: 1px solid #d4d9de;
  background: #5c6d84;
  color: #fff;
  font-size: 17px;
  font-weight: 400;
}
.sheet th:first-child {
  border-top-left-radius: 6px;
}
.sheet th:last-child {
  border-right: 0;
  border-top-right-radius: 6px;
}
.sheet td {
  height: 51px;
  padding: 0;
  border-right: 1px dotted #ddd;
  border-bottom: 1px solid #eee;
  text-align: center;
}
.dfoot {
  display: flex;
  align-items: flex-start;
  justify-content: space-between;
  height: 83px;
  margin: 19px 12px 0;
  padding: 4px 3px 0 13px;
  border-top: 1px solid #a3a3a3;
  font: 22px/26px "Liberation Sans", Arial, sans-serif;
}
.del {
  width: 112px;
  height: 50px;
  margin-top: 8px;
  border: 1px solid #1f66ad;
  border-radius: 5px;
  background: #fff;
  color: #1a579c;
}
.ring {
  display: flex;
  padding: 3px 5px 4px 2px;
  border: 5px solid #e81e26;
}
.next {
  width: 109px;
  height: 50px;
  border-radius: 5px;
  background: #17479c;
  color: #fff;
}
.call {
  position: absolute;
  left: 100%;
  display: flex;
  align-items: center;
  gap: 10px;
  color: #fff;
  font: 700 30px/36px "Noto Sans", sans-serif;
}
.call b {
  font-weight: 700;
}
.one {
  top: 119px;
  margin-left: 13px;
}
.two {
  top: 584px;
  gap: 4px;
  margin-left: 15px;
}
</style>
